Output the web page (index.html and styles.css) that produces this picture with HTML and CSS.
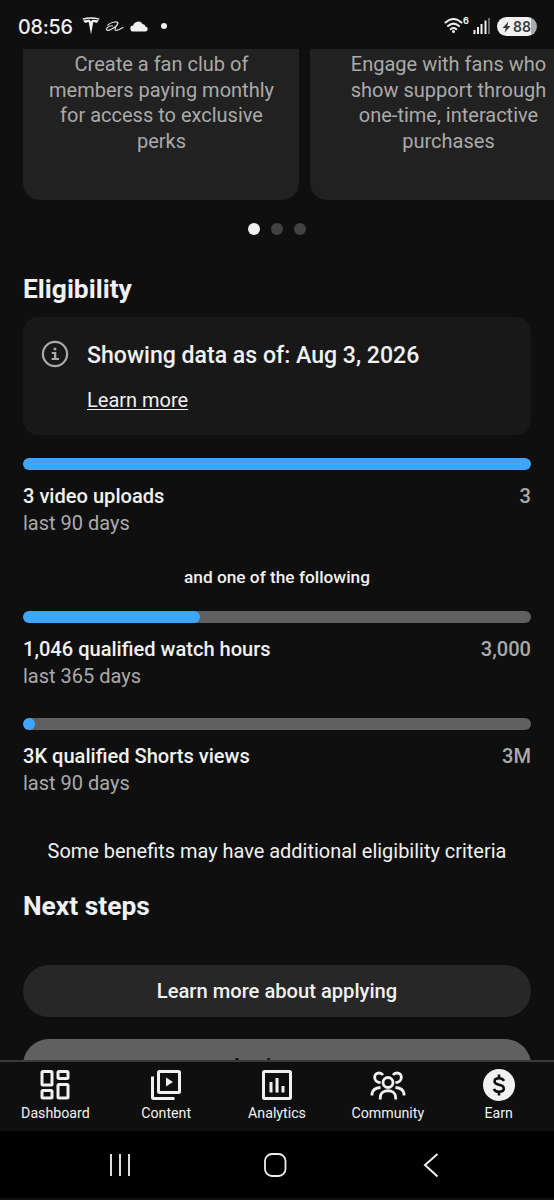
FILE: index.html
```html
<!DOCTYPE html>
<html lang="en">
<head>
<meta charset="utf-8">
<title>Earn</title>
<link rel="stylesheet" href="styles.css">
</head>
<body>
<div class="screen">
  <header class="status">
    <div class="status-left">
      <span class="clock">08:56</span>
      <svg class="tesla" width="18" height="18" viewBox="0 0 18 18"><path d="M.5 1.5Q9-1 17.500 1.500L17 2.700Q9 .6 1 2.700Z" fill="#f1f1f1"/><path d="M1.200 3.600Q4.500 2.600 7.500 2.700L9 4.300l1.500-1.600q3-.1 6.300.9-.8 2-2.600 2.300-1.200-.8-2.900-.9L9 17.500 6.700 5q-1.700.1-2.900.9-1.800-.3-2.600-2.300Z" fill="#f1f1f1"/></svg>
      <svg class="script-a" width="19" height="11" viewBox="0 0 19 11" fill="none" stroke="#dcdcdc" stroke-linecap="round"><path d="M2.800 4.200C5.500 1.200 11.500 .2 12.800 1.600 14.300 3.400 6 9.900 2.400 9.300-.3 8.700 3.200 4.300 7.500 4.800M12.600 2.500C11 5.500 9.200 8.600 10.400 9.200 12 9.600 15.500 8.200 18 6.600" stroke-width="1.200"/></svg>
      <svg class="cloud" width="19" height="11" viewBox="0 0 19 11"><path d="M3.500 10.500a3 3 0 0 1-.3-6A5.200 5.200 0 0 1 12.600 3a3.200 3.200 0 0 1 2.900 2.400 2.600 2.600 0 0 1 .3 5.100Z" fill="#f1f1f1"/></svg>
      <span class="status-dot"></span>
    </div>
    <div class="status-right">
      <svg class="wifi" width="19" height="18" viewBox="0 0 19 18" fill="none" stroke="#eee" stroke-width="2" stroke-linecap="round"><path d="M1.500 5.500Q9.500 -1.500 17.500 5.500M4 9Q9.500 4.200 15 9M6.700 12.200Q9.500 9.800 12.300 12.200"/><circle cx="9.500" cy="14.600" r="1.500" fill="#eee" stroke="none"/></svg>
      <span class="wifi-num">6</span>
      <svg class="signal" width="18" height="17" viewBox="0 0 18 17" stroke-width="2" stroke="#eee"><path d="M1.500 13V17M5 10V17M8.500 7V17M12.500 3.500V17"/><path d="M16 1V17" stroke="#666"/></svg>
      <span class="battery"><svg width="9" height="12" viewBox="0 0 9 12"><path d="M6.500.5.500 7h3.200L2.600 11.500 8.600 5H5.300Z" fill="#3c3c3c"/></svg>88</span>
    </div>
  </header>

  <main class="content">
    <section class="carousel">
      <article class="card"><p>Create a fan club of<br>members paying monthly<br>for access to exclusive<br>perks</p></article>
      <article class="card"><p>Engage with fans who<br>show support through<br>one-time, interactive<br>purchases</p></article>
    </section>
    <div class="pager"><i class="on"></i><i></i><i></i></div>

    <h2 class="title">Eligibility</h2>
    <section class="notice">
      <svg width="28" height="28" viewBox="0 0 28 28"><circle cx="14" cy="14" r="12.100" fill="none" stroke="#aaa" stroke-width="2.200"/><path d="M12.700 7.800h2.600v2.400h-2.600zM10.800 12h4.500v6H18v2h-7.400V18h2.400v-4h-2.200z" fill="#aaa"/></svg>
      <div><p class="notice-title">Showing data as of: Aug 3, 2026</p><a class="link">Learn more</a></div>
    </section>

    <section class="metric first">
      <div class="bar"><div class="fill" style="width:100%"></div></div>
      <div class="row"><span>3 video uploads</span><span class="goal">3</span></div>
      <p class="period">last 90 days</p>
    </section>
    <p class="divider">and one of the following</p>
    <section class="metric">
      <div class="bar"><div class="fill" style="width:34.870%"></div></div>
      <div class="row"><span>1,046 qualified watch hours</span><span class="goal">3,000</span></div>
      <p class="period">last 365 days</p>
    </section>
    <section class="metric last">
      <div class="bar"><div class="fill" style="width:0.100%"></div></div>
      <div class="row"><span>3K qualified Shorts views</span><span class="goal">3M</span></div>
      <p class="period">last 90 days</p>
    </section>
    <p class="footnote">Some benefits may have additional eligibility criteria</p>
    <h2 class="title next">Next steps</h2>
    <button class="pill">Learn more about applying</button>
    <button class="pill disabled">Apply now</button>
  </main>

  <nav class="tabs">
    <a class="tab"><svg width="34" height="34" viewBox="0 0 34 34" fill="none" stroke="#f1f1f1" stroke-width="3"><rect x="4" y="3.500" width="10" height="13.500" rx="1"/><rect x="20" y="3.500" width="10" height="7" rx="1"/><rect x="4" y="22.500" width="10" height="7.500" rx="1"/><rect x="20" y="16.500" width="10" height="13.500" rx="1"/></svg><span>Dashboard</span></a>
    <a class="tab"><svg width="34" height="34" viewBox="0 0 34 34" fill="none" stroke="#f1f1f1" stroke-width="3"><rect x="9.500" y="3.500" width="21" height="21" rx="1"/><path d="M3.500 8.500V29.500a1 1 0 0 0 1 1H25.500"/><path d="M17 9.500v9l7-4.500z" fill="#f1f1f1" stroke="none"/></svg><span>Content</span></a>
    <a class="tab"><svg width="34" height="34" viewBox="0 0 34 34" fill="none" stroke="#f1f1f1" stroke-width="3"><rect x="3.500" y="3.500" width="27" height="27" rx="1"/><path d="M11 14V24.500M17 10V24.500M23 18V24.500"/></svg><span>Analytics</span></a>
    <a class="tab"><svg width="36" height="34" viewBox="0 0 36 34" fill="none" stroke="#f1f1f1" stroke-width="2.800"><circle cx="18" cy="14.500" r="5"/><path d="M10.300 31.500V29.500C10.300 20.500 25.700 20.500 25.700 29.500V31.500M2 27.500V25.500Q3 20 10.500 19.500M34 27.500V25.500Q33 20 25.500 19.500M10.500 14.500C3 14.500 3 5 9 5Q11.500 5 13 7M25.500 14.500C33 14.500 33 5 27 5Q24.500 5 23 7"/></svg><span>Community</span></a>
    <a class="tab"><svg width="34" height="34" viewBox="0 0 34 34"><circle cx="17" cy="17" r="16" fill="#f1f1f1"/><path d="M22 12.800Q20.500 10.300 17 10.300 12.600 10.300 12.600 13.300 12.600 16 17 16.800 21.800 17.600 21.800 20.600 21.800 23.800 17 23.800 13 23.800 11.900 21M17 6.500V10M17 24V27.500" fill="none" stroke="#0f0f0f" stroke-width="2.600"/></svg><span>Earn</span></a>
  </nav>

  <footer class="system">
    <svg width="24" height="26" viewBox="0 0 24 26" stroke="#ddd" stroke-width="2"><path d="M3 2V24M12 2V24M21 2V24"/></svg>
    <svg width="26" height="26" viewBox="0 0 26 26" fill="none" stroke="#eee" stroke-width="1.800"><rect x="3" y="2" width="20.500" height="22" rx="7"/></svg>
    <svg width="26" height="26" viewBox="0 0 26 26" fill="none" stroke="#eee" stroke-width="2"><path d="M19.500 2 7 13 19.500 24.500"/></svg>
  </footer>
</div>
</body>
</html>
```
FILE: styles.css
```css
* { box-sizing: border-box; margin: 0; padding: 0; }
body { background: #0f0f0f; color: #f1f1f1; font-family: Roboto, sans-serif; }
.screen { width: 554px; height: 1200px; display: flex; flex-direction: column; overflow: hidden; }

.status { height: 49px; flex: none; display: flex; justify-content: space-between; padding: 0 17px 0 18px; }
.status-left, .status-right { display: flex; align-items: flex-start; }
.clock { font: 500 19.700px/24px Inter, sans-serif; margin-top: 15px; width: 64px; letter-spacing: -0.200px; }
.tesla { margin-top: 17px; }
.script-a { margin: 21px 0 0 5px; }
.cloud { margin: 21px 0 0 6px; }
.status-dot { width: 6px; height: 6px; border-radius: 50%; background: #f1f1f1; margin: 23px 0 0 12px; }
.wifi { margin-top: 17px; }
.wifi-num { font: 700 9px/12px Inter, sans-serif; width: 7px; margin-top: 15px; }
.signal { margin: 17px 0 0 3px; }
.battery { width: 40px; height: 19px; border-radius: 10px; margin: 17px 0 0 6px; background: linear-gradient(90deg, #f1f1f1 34px, #aaa 34px); color: #3c3c3c; font: 600 14px/19px Inter, sans-serif; display: flex; align-items: center; padding-left: 5px; gap: 2px; }

.content { flex: 1; min-height: 0; overflow: hidden; padding: 0 23px; }
.carousel { display: flex; gap: 11px; height: 151px; }
.card { flex: none; width: 276px; background: #212121; border-radius: 0 0 17px 17px; color: #aaa; text-align: center; font-size: 20px; line-height: 25.700px; padding: 3px 0 0 1px; }
.pager { display: flex; justify-content: center; gap: 11px; margin-top: 23px; }
.pager i { width: 12px; height: 12px; border-radius: 50%; background: #424242; }
.pager .on { background: #f1f1f1; }
.title { font-size: 26.400px; line-height: 34px; font-weight: 700; margin-top: 37px; }
.notice { height: 118px; margin-top: 11px; border-radius: 15px; background: #181818; display: flex; padding: 24px 18px; gap: 18px; }
.notice svg { flex: none; margin-top: -1px; }
.notice-title { font-size: 23.080px; line-height: 30px; font-weight: 500; }
.link { display: block; width: fit-content; margin-top: 17px; font-size: 20px; line-height: 24px; text-decoration: underline; text-underline-offset: 2px; text-decoration-thickness: 1px; }
.metric { margin-top: 23px; font-size: 20px; }
.metric.last { margin-top: 28px; }
.bar { height: 12px; border-radius: 6px; background: #606060; overflow: hidden; }
.fill { height: 12px; min-width: 12px; border-radius: 6px; background: #3ea6ff; }
.row { display: flex; justify-content: space-between; font-size: 20.080px; font-weight: 500; line-height: 27px; margin-top: 13px; }
.goal, .period { color: #aaa; }
.period { line-height: 27px; }
.divider { text-align: center; font-size: 17.250px; font-weight: 500; line-height: 26px; margin-top: 27px; }
.divider + .metric { margin-top: 21px; }
.footnote { text-align: center; font-size: 19.950px; line-height: 28px; margin-top: 40px; white-space: nowrap; }
.title.next { margin-top: 24px; }
.pill { display: block; width: 508px; height: 52px; border: 0; border-radius: 26px; background: #272727; color: #f1f1f1; font: 500 20.150px/52px Roboto, sans-serif; margin-top: 42px; text-align: center; }
.pill.disabled { background: #606060; color: #0f0f0f; margin-top: 22px; padding-top: 1px; }

.tabs { height: 71px; flex: none; border-top: 2px solid #3a3a3a; display: grid; grid-template-columns: repeat(5, 1fr); background: #0f0f0f; }
.tab { display: flex; flex-direction: column; align-items: center; padding-top: 6px; font-size: 14.200px; line-height: 18px; }
.tab span { margin-top: 2px; }
.system { height: 69px; flex: none; background: #000; display: flex; justify-content: space-between; align-items: center; padding: 0 110px 0 108px; border-bottom: 2px solid #0f0f0f; }
```
